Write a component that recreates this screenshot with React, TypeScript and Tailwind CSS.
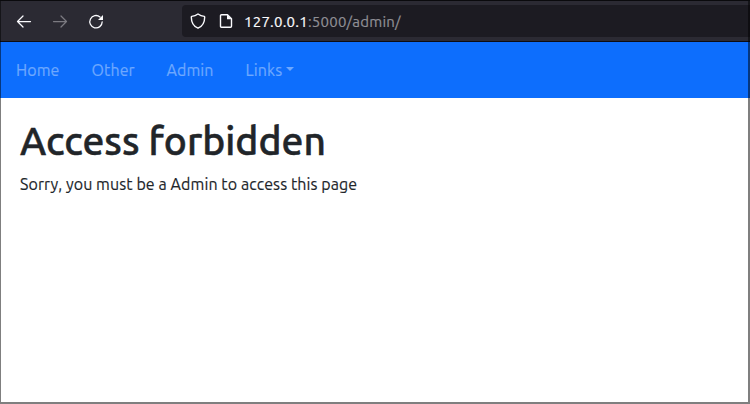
const navItems = [
  { label: "Home", width: "w-[75.5px]" },
  { label: "Other", width: "w-[75px]" },
  { label: "Admin", width: "w-[79px]" },
];

function BrowserBar() {
  return (
    <header className="flex h-[42px] shrink-0 items-center border-y border-t-[#15141a] border-b-[#0d0c12] bg-[#2b2a33] text-[#fbfbfe]">
      <div className="flex w-[182px] items-center pt-px pl-4">
        <svg className="mr-5 h-4 w-4" viewBox="0 0 16 16" fill="none" stroke="currentColor" strokeWidth="1.25" strokeLinecap="round" strokeLinejoin="round">
          <path d="M14.5 7.5H1.5M7 2 1.5 7.5 7 13" />
        </svg>
        <svg className="mr-5 h-4 w-4 text-[#7b7a81]" viewBox="0 0 16 16" fill="none" stroke="currentColor" strokeWidth="1.25" strokeLinecap="round" strokeLinejoin="round">
          <path d="M1.5 7.5h13M9 2 14.5 7.5 9 13" />
        </svg>
        <svg className="h-4 w-4" viewBox="0 0 16 16" fill="none" stroke="currentColor" strokeWidth="1.3" strokeLinecap="round">
          <path d="M12 3A6.2 6.2 0 1 0 14.2 7.8" />
          <path d="M15 1v5h-5z" fill="currentColor" stroke="none" />
        </svg>
      </div>
      <div className="flex h-8 flex-1 items-center rounded-l bg-[#1c1b22] pl-2">
        <svg className="mr-3 h-4 w-4" viewBox="0 0 16 16" fill="none" stroke="currentColor" strokeWidth="1.4" strokeLinejoin="round">
          <path d="M8 1 C6.4 2.2 3.8 3.2 1.7 3.4 Q1.3 3.5 1.3 4 C1.3 9 3.2 13.2 8 15.2 C12.8 13.2 14.7 9 14.7 4 Q14.7 3.5 14.3 3.4 C12.2 3.2 9.6 2.2 8 1Z" />
        </svg>
        <svg className="mr-[10px] h-4 w-4" viewBox="0 0 16 16" fill="none" stroke="currentColor" strokeWidth="1.4" strokeLinejoin="round">
          <path d="M3.5 1.7h6l4 4v7.6q0 1-1 1h-9q-1 0-1-1V2.7q0-1 1-1Z" />
          <path d="M9 1.5v4.7h4.7z" fill="currentColor" stroke="none" />
        </svg>
        <span className="whitespace-pre pt-0.5 text-[15px] leading-5 tracking-[0.23px] [-webkit-text-stroke:0.2px_currentColor]">
          127.0.0.1<span className="text-[#8f8f95]">:5000/admin/</span>
        </span>
      </div>
    </header>
  );
}

export default function App() {
  return (
    <div className="relative flex h-[404px] w-[750px] flex-col overflow-hidden bg-white font-['Ubuntu','Noto_Sans',sans-serif]">
      <BrowserBar />
      <nav className="flex h-14 shrink-0 items-center bg-[#0d6efd] pl-4 text-[16px] text-[#6ea8fe] [-webkit-text-stroke:0.2px_#6ea8fe]">
        {navItems.map((item) => (
          <a key={item.label} className={`${item.width} whitespace-nowrap tracking-[0.1px]`}>{item.label}</a>
        ))}
        <a className="flex items-center whitespace-nowrap tracking-[0.1px]">
          Links
          <span className="mb-0.5 ml-1 border-x-[4.5px] border-t-[4.5px] border-x-transparent border-t-[#6ea8fe]" />
        </a>
      </nav>
      <main className="px-5 pt-[19px] text-[#212529]">
        <h1 className="mb-[7px] whitespace-nowrap text-[39px] leading-[48px] font-medium [-webkit-text-stroke:0.5px_#212529]"><span>Access forbidden</span></h1>
        <p className="whitespace-nowrap text-[16px] leading-6 tracking-[0.09px] [-webkit-text-stroke:0.15px_#212529]"><span>Sorry, you must be a Admin to access this page</span></p>
      </main>
      <div className="pointer-events-none absolute inset-0 border-t border-r-2 border-b-2 border-l border-black/50" />
    </div>
  );
}
